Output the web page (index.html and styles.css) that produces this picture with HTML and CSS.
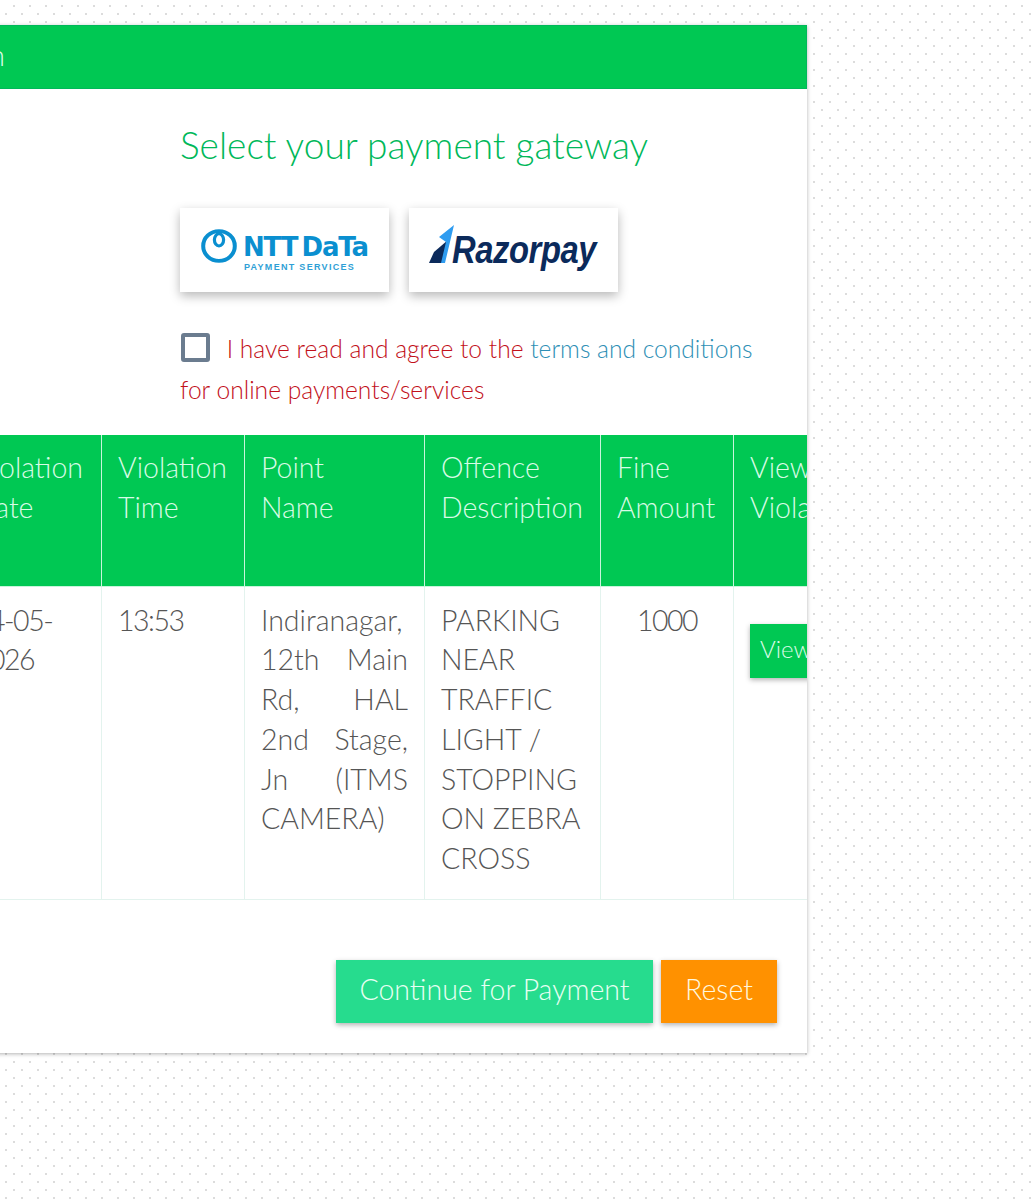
FILE: index.html
```html
<!DOCTYPE html>
<html lang="en">
<head>
    <meta charset="UTF-8">
    <meta name="viewport" content="width=device-width, initial-scale=1.0">
    <title>Payment</title>
    <link rel="stylesheet" href="styles.css">
</head>
<body>
    <div class="card">
        <div class="card-header">Pay for Violation</div>

        <div class="gateway-row">
            <div class="gateway-side"></div>
            <div class="gateway">
                <h2 class="gateway-title">Select your payment gateway</h2>
                <div class="gateway-list">
                    <div class="gateway-logo">
                        <svg class="ntt-icon" viewBox="0 0 36 36" width="36" height="34" preserveAspectRatio="none">
                            <circle cx="18" cy="18" r="15.8" fill="none" stroke="#0a8fd0" stroke-width="4"/>
                            <ellipse cx="18" cy="11.5" rx="4.6" ry="6.5" fill="none" stroke="#0a8fd0" stroke-width="3.2"/>
                        </svg>
                        <div class="ntt-text">
                            <span class="ntt-name">NTT DaTa</span>
                            <span class="ntt-sub">PAYMENT SERVICES</span>
                        </div>
                    </div>
                    <div class="gateway-logo gateway-logo-rzp">
                        <svg class="rzp-icon" viewBox="0 0 26 40" width="26" height="40">
                            <polygon points="0,38 5,27 19,15 13,38" fill="#0b2a5b"/>
                            <polygon points="10,12 25,0 16,38 12,38 17,17" fill="#2f9cf0"/>
                        </svg>
                        <span class="rzp-name">Razorpay</span>
                    </div>
                </div>
                <p class="agree">
                    <input type="checkbox" class="agree-check">
                    I have read and agree to the <a href="#" class="agree-link">terms and conditions</a> for online payments/services
                </p>
            </div>
        </div>

        <table class="fines">
            <thead>
                <tr>
                    <th class="col-vehicle">Vehicle Number</th>
                    <th class="col-date">Violation Date</th>
                    <th class="col-time">Violation Time</th>
                    <th class="col-point">Point<br>Name</th>
                    <th class="col-offence">Offence Description</th>
                    <th class="col-fine">Fine Amount</th>
                    <th class="col-view">View Violation</th>
                </tr>
            </thead>
            <tbody>
                <tr>
                    <td></td>
                    <td class="num">14-05-2026</td>
                    <td class="num">13:53</td>
                    <td class="justify">Indiranagar, 12th Main Rd, HAL 2nd Stage, Jn (ITMS CAMERA)</td>
                    <td>PARKING NEAR TRAFFIC LIGHT / STOPPING ON ZEBRA CROSS</td>
                    <td class="num center">1000</td>
                    <td><button type="button" class="button-view">View</button></td>
                </tr>
            </tbody>
        </table>

        <div class="actions">
            <button type="button" class="button button-pay">Continue for Payment</button>
            <button type="button" class="button button-reset">Reset</button>
        </div>
    </div>
</body>
</html>
```

FILE: styles.css
```css
body {
    margin: 0;
    padding: 25px 0 0;
    height: 1175px;
    overflow: hidden;
    font-family: 'Lato', sans-serif;
    font-weight: 300;
    background-color: white;
    background-image:
        radial-gradient(circle, #dcdcdc 1px, transparent 1.5px),
        radial-gradient(circle, #dcdcdc 1px, transparent 1.5px);
    background-size: 16px 16px;
    background-position: 6px -2px, 14px 6px;
}

.card {
    width: 1107px;
    margin-left: -300px;
    background-color: white;
    box-shadow: 0 1px 4px rgba(0, 0, 0, 0.3);
    overflow: hidden;
}

.card-header {
    height: 64px;
    line-height: 60px;
    padding-right: 802px;
    text-align: right;
    white-space: nowrap;
    background-color: #00c853;
    box-shadow: inset 0 0 0 1px #00b85a;
    color: #d8fbe6;
    font-size: 28.5px;
}

.gateway-row {
    display: flex;
}

.gateway-side {
    width: 480px;
}

.gateway {
    width: 590px;
}

.gateway-title {
    margin: 34px 0 0;
    font-size: 37px;
    line-height: 44px;
    font-weight: 300;
    color: #00b85a;
}

.gateway-list {
    display: flex;
    gap: 20px;
    margin-top: 41px;
}

.gateway-logo {
    width: 209px;
    height: 84px;
    display: flex;
    align-items: center;
    justify-content: center;
    background-color: white;
    box-shadow: 0 4px 10px rgba(0, 0, 0, 0.28);
}

.gateway-logo-rzp {
    justify-content: flex-start;
    padding-left: 20px;
    box-sizing: border-box;
}

.ntt-icon {
    margin-right: 6px;
    margin-top: -8px;
}

.ntt-text {
    display: flex;
    flex-direction: column;
    align-items: flex-start;
    margin-top: 8px;
}

.ntt-name {
    font-family: 'DejaVu Sans', sans-serif;
    font-weight: 700;
    font-size: 26px;
    line-height: 25px;
    letter-spacing: -1.1px;
    word-spacing: -4px;
    color: #0a8fd0;
}

.ntt-sub {
    margin-left: 1px;
    font-family: 'Liberation Sans', sans-serif;
    font-weight: 700;
    font-size: 9px;
    line-height: 14px;
    letter-spacing: 1.3px;
    color: #2f9fd6;
}

.rzp-icon {
    flex-shrink: 0;
    margin-top: -10px;
}

.rzp-name {
    flex-shrink: 0;
    margin-left: -3px;
    font-family: 'Liberation Sans', sans-serif;
    font-weight: 700;
    font-style: italic;
    font-size: 39px;
    letter-spacing: -0.5px;
    color: #0b2a5b;
    transform: scaleX(0.84);
    transform-origin: left center;
}

.agree {
    margin: 36px 0 0;
    font-size: 24.6px;
    line-height: 41px;
    color: #c2101a;
}

.agree-check {
    appearance: none;
    box-sizing: border-box;
    width: 29px;
    height: 29px;
    margin: 0 10px 0 1px;
    border: 4px solid #6b7c8f;
    border-radius: 3px;
    vertical-align: -4px;
}

.agree-link {
    color: #2e8fb5;
    text-decoration: none;
}

.fines {
    table-layout: fixed;
    width: 1184px;
    margin-top: 25px;
    border-collapse: collapse;
    font-size: 28.5px;
    line-height: 39.8px;
}

.fines th, .fines td {
    box-sizing: border-box;
    padding: 14px 16px 20px;
    text-align: left;
    vertical-align: top;
}

.fines th {
    height: 151px;
    padding-top: 13px;
    background-color: #00c853;
    border: 1px solid #c8f5dc;
    border-top: none;
    color: #d8fbe6;
    font-weight: 300;
}

.fines td {
    border: 1px solid #e3f3ee;
    color: #555;
}

.col-vehicle { width: 257px; }
.col-date { width: 144px; }
.col-time { width: 143px; }
.col-point { width: 180px; }
.col-offence { width: 176px; }
.col-fine { width: 133px; }
.col-view { width: 151px; }

.fines td.justify {
    text-align: justify;
}

.fines td.center {
    text-align: center;
}

.fines td.num {
    letter-spacing: -1.5px;
}

.button-view {
    width: 120px;
    height: 54px;
    margin-top: 23px;
    padding: 0 10px 4px;
    border: none;
    text-align: left;
    font-family: inherit;
    font-weight: 300;
    font-size: 24px;
    color: #d8fbe6;
    background-color: #00c853;
    box-shadow: 0 2px 5px rgba(0, 0, 0, 0.3);
}

.actions {
    display: flex;
    justify-content: flex-end;
    gap: 8px;
    padding: 60px 30px 30px 0;
}

.button {
    height: 63px;
    padding: 0 0 5px;
    border: none;
    font-family: inherit;
    font-weight: 300;
    font-size: 28.5px;
    box-shadow: 0 2px 5px rgba(0, 0, 0, 0.3);
}

.button-pay {
    width: 317px;
    background-color: #26dc8e;
    color: #e8fff3;
}

.button-reset {
    width: 116px;
    background-color: #ff9100;
    color: #fff6dd;
}
```
